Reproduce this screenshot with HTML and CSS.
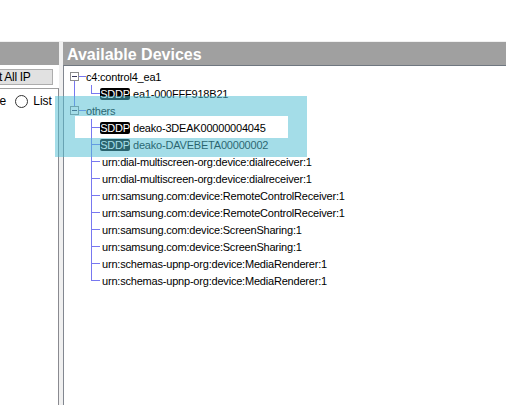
FILE: index.html
```html
<!DOCTYPE html>
<html>
<head>
<meta charset="utf-8">
<link rel="stylesheet" href="styles.css">
</head>
<body>
<div class="top"></div>
<div class="main">
  <div class="left">
    <div class="hdr"></div>
    <div class="left-body">
      <div class="btn-row"><button class="btn">Select All IP</button></div>
      <div class="box">
        <div class="radios">
          <span class="radio"></span><span class="rlabel first">Tree</span>
          <span class="radio"></span><span class="rlabel">List</span>
        </div>
      </div>
    </div>
  </div>
  <div class="right">
    <div class="hdr title">Available Devices</div>
    <div class="tree">
      <div class="row"><span class="g root r-first"><span class="pm"></span></span><span class="txt">c4:control4_ea1</span></div>
      <div class="row"><span class="g child through last"></span><span class="sddp">SDDP</span><span class="name">ea1-000FFF918B21</span></div>
      <div class="row"><span class="g root r-last"><span class="pm"></span></span><span class="txt">others</span></div>
      <div class="row"><span class="g child"></span><span class="sddp">SDDP</span><span class="name">deako-3DEAK00000004045</span></div>
      <div class="row"><span class="g child"></span><span class="sddp">SDDP</span><span class="name">deako-DAVEBETA00000002</span></div>
      <div class="row"><span class="g child"></span><span class="urn">urn:dial-multiscreen-org:device:dialreceiver:1</span></div>
      <div class="row"><span class="g child"></span><span class="urn">urn:dial-multiscreen-org:device:dialreceiver:1</span></div>
      <div class="row"><span class="g child"></span><span class="urn">urn:samsung.com:device:RemoteControlReceiver:1</span></div>
      <div class="row"><span class="g child"></span><span class="urn">urn:samsung.com:device:RemoteControlReceiver:1</span></div>
      <div class="row"><span class="g child"></span><span class="urn">urn:samsung.com:device:ScreenSharing:1</span></div>
      <div class="row"><span class="g child"></span><span class="urn">urn:samsung.com:device:ScreenSharing:1</span></div>
      <div class="row"><span class="g child"></span><span class="urn">urn:schemas-upnp-org:device:MediaRenderer:1</span></div>
      <div class="row"><span class="g child last"></span><span class="urn">urn:schemas-upnp-org:device:MediaRenderer:1</span></div>
    </div>
  </div>
</div>
<div class="overlay"></div>
</body>
</html>
```

FILE: styles.css
```css
html, body {
  margin: 0;
  padding: 0;
}
body {
  width: 506px;
  height: 405px;
  overflow: hidden;
  background: #fff;
  font-family: "Liberation Sans", Arial, sans-serif;
  color: #000;
  position: relative;
}
.top {
  height: 41px;
}
.main {
  display: flex;
  gap: 4px;
  background: #f0f0f0;
  padding-top: 1px;
  height: 364px;
  box-sizing: border-box;
}
.left {
  width: 59px;
  flex: none;
  display: flex;
  flex-direction: column;
  overflow: hidden;
}
.hdr {
  height: 23px;
  background: #a0a0a0;
  flex: none;
}
.left-body {
  flex: 1;
  background: #fff;
  display: flex;
  flex-direction: column;
}
.btn-row {
  padding-top: 4px;
  height: 16px;
  flex: none;
}
.btn {
  display: block;
  margin: 0 0 0 -52px;
  width: 105px;
  height: 16px;
  box-sizing: border-box;
  border: 1px solid #adadad;
  background: #e1e1e1;
  font: 12px "Liberation Sans", Arial, sans-serif;
  letter-spacing: -0.3px;
  line-height: 14px;
  padding: 0;
  color: #000;
  white-space: nowrap;
}
.box {
  margin-top: 3px;
  flex: 1;
  border-top: 1px solid #a0a0a0;
  border-right: 1px solid #8a8a90;
}
.radios {
  display: flex;
  align-items: center;
  margin-left: -36px;
  margin-top: 5px;
  height: 14px;
  font-size: 12px;
  white-space: nowrap;
}
.radio {
  width: 13px;
  height: 13px;
  box-sizing: border-box;
  border: 1px solid #333;
  border-radius: 50%;
  background: #fff;
  flex: none;
}
.rlabel {
  margin-left: 5px;
}
.rlabel.first {
  margin-right: 9px;
}
.right {
  flex: 1;
  min-width: 0;
  display: flex;
  flex-direction: column;
}
.title {
  color: #fff;
  font-weight: bold;
  font-size: 16px;
  line-height: 21px;
  padding: 2px 0 0 4px;
  box-sizing: border-box;
  white-space: nowrap;
}
.tree {
  flex: 1;
  background: #fff;
  border-top: 1px solid #6f7780;
  border-left: 1px solid #828790;
  padding-top: 2px;
  font-size: 11px;
  letter-spacing: -0.2px;
}
.row {
  display: flex;
  align-items: center;
  height: 17px;
  white-space: nowrap;
}
.g {
  flex: none;
  height: 17px;
  display: flex;
  align-items: center;
  background-repeat: no-repeat;
}
.g.root {
  width: 22px;
  padding-left: 6px;
  box-sizing: border-box;
}
.g.root.r-first {
  background-image: linear-gradient(#7878f0, #7878f0), linear-gradient(#7878f0, #7878f0);
  background-position: 15px 8px, 10px 13px;
  background-size: 7px 1px, 1px 4px;
}
.g.root.r-last {
  background-image: linear-gradient(#7878f0, #7878f0), linear-gradient(#7878f0, #7878f0);
  background-position: 15px 8px, 10px 0;
  background-size: 7px 1px, 1px 4px;
}
.pm {
  width: 9px;
  height: 9px;
  box-sizing: border-box;
  border: 1px solid #8c8c8c;
  background: #fff linear-gradient(#3a3a5a, #3a3a5a) center / 5px 1px no-repeat;
}
.g.child {
  width: 36px;
  background-image: linear-gradient(#7878f0, #7878f0), linear-gradient(#7878f0, #7878f0);
  background-position: 27px 0, 27px 8px;
  background-size: 1px 100%, 9px 1px;
}
.g.child.last {
  background-size: 1px 9px, 9px 1px;
}
.g.child.through {
  background-image: linear-gradient(#7878f0, #7878f0), linear-gradient(#7878f0, #7878f0), linear-gradient(#7878f0, #7878f0);
  background-position: 27px 0, 27px 8px, 10px 0;
  background-size: 1px 9px, 9px 1px, 1px 100%;
}
.sddp {
  flex: none;
  width: 30px;
  text-align: center;
  background: #000;
  color: #fff;
  border-radius: 2px;
  height: 12px;
  line-height: 12px;
  padding: 0;
  font-size: 11px;
  letter-spacing: -0.3px;
}
.name {
  margin-left: 3px;
}
.urn {
  margin-left: 2px;
}
.overlay {
  position: absolute;
  left: 55px;
  top: 96px;
  width: 252px;
  height: 61px;
  box-sizing: border-box;
  border-style: solid;
  border-color: rgba(80, 190, 210, 0.52);
  border-width: 20px 19px 19px 20px;
}
```
